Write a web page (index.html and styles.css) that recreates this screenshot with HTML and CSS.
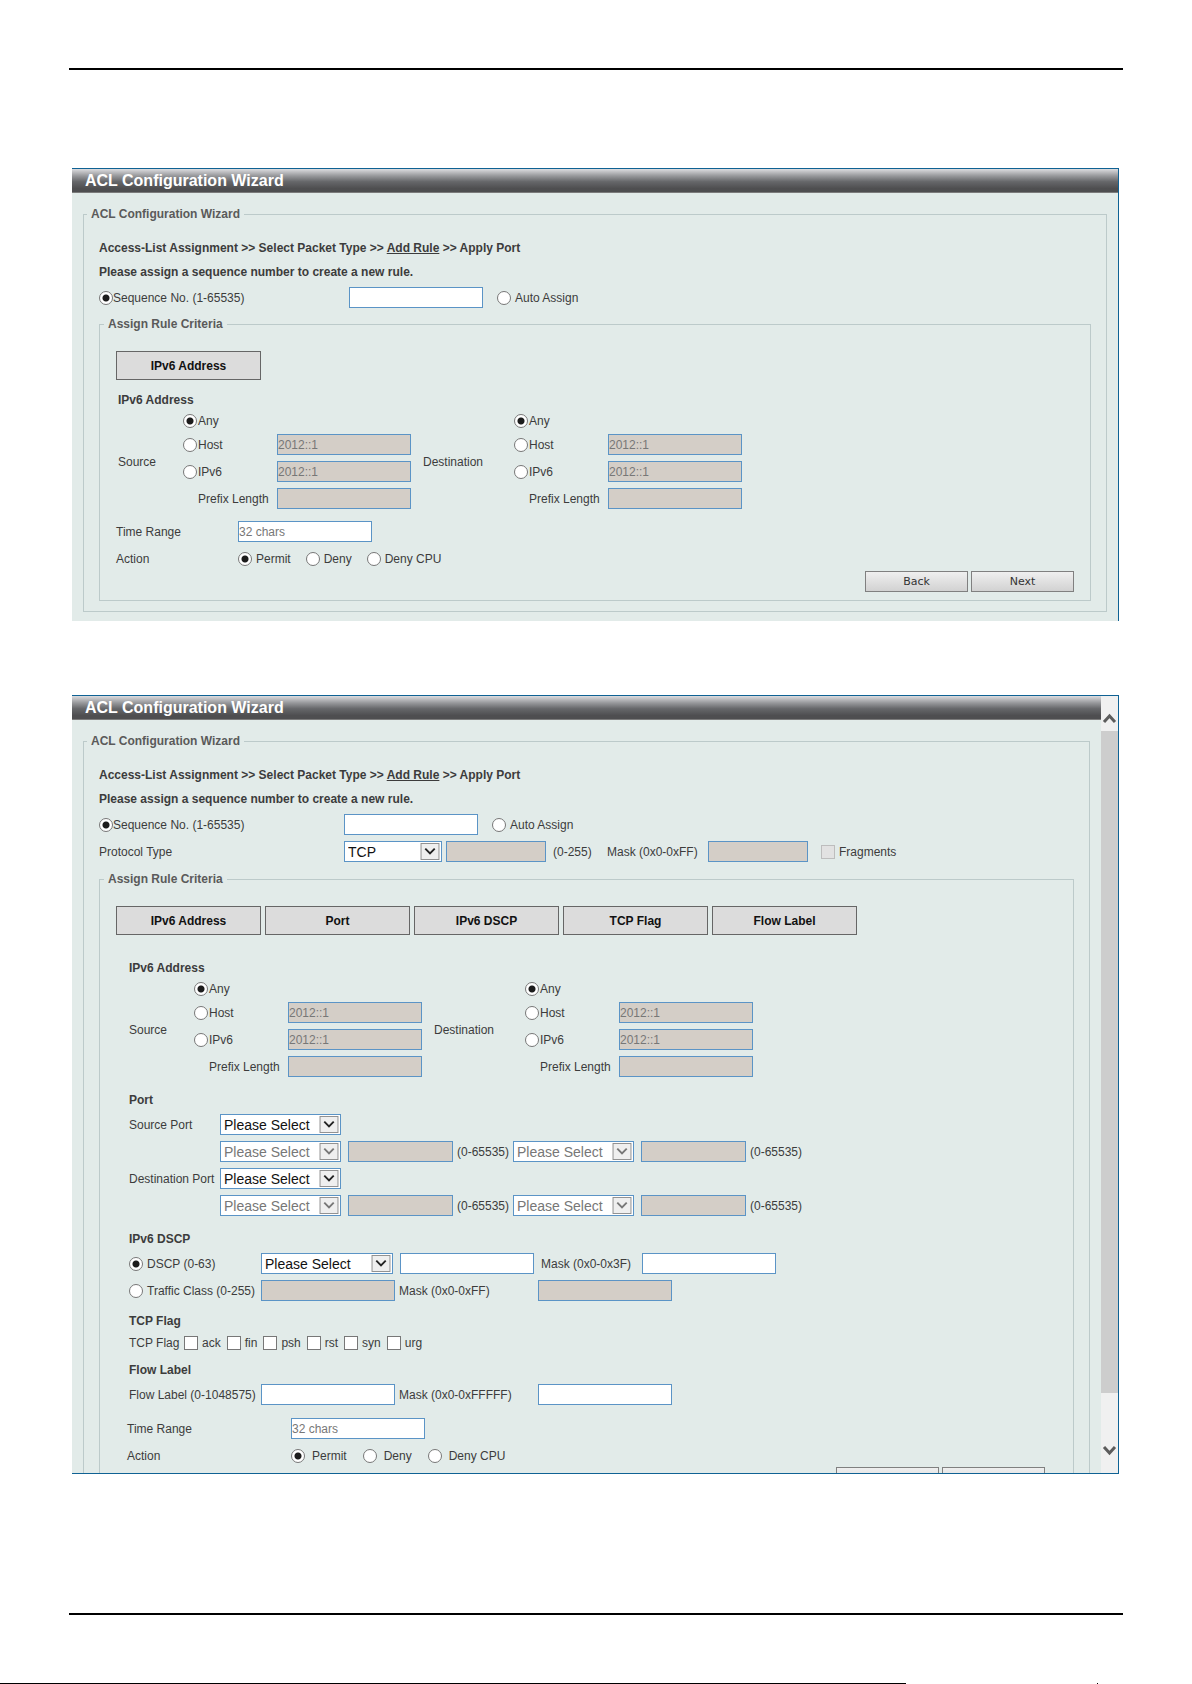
FILE: index.html
```html
<!DOCTYPE html>
<html lang="en">
<head>
    <meta charset="UTF-8">
    <meta name="viewport" content="width=device-width, initial-scale=1.0">
    <title>ACL Configuration Wizard</title>
    <link rel="stylesheet" href="styles.css">
</head>
<body>
    <svg class="symbols" aria-hidden="true">
        <symbol id="arrow" viewBox="0 0 20 18">
            <rect x="0.5" y="0.5" width="19" height="17" fill="#efefef" stroke="#8c8c8c"/>
            <path d="M5 6l5 5 5-5" fill="none" stroke="currentColor" stroke-width="2"/>
        </symbol>
    </svg>

    <div class="page">
        <hr class="rule">

        <form class="panel first">
            <div class="content">
                <h1>ACL Configuration Wizard</h1>
                <fieldset class="wizard">
                    <legend>ACL Configuration Wizard</legend>
                    <p class="steps">Access-List Assignment &gt;&gt; Select Packet Type &gt;&gt; <a href="#">Add Rule</a> &gt;&gt; Apply Port</p>
                    <p class="steps">Please assign a sequence number to create a new rule.</p>
                    <div class="row">
                        <label class="seq-label"><input type="radio" name="seq1" checked>Sequence No. (1-65535)</label>
                        <input type="text" class="field" aria-label="Sequence No.">
                        <label class="auto"><input type="radio" name="seq1">Auto Assign</label>
                    </div>

                    <fieldset class="criteria">
                        <legend>Assign Rule Criteria</legend>
                        <div class="tabs">
                            <button type="button">IPv6 Address</button>
                        </div>
                        <section class="address">
                            <h2>IPv6 Address</h2>
                            <div class="pair">
                                <span class="side">Source</span>
                                <div class="options">
                                    <label><input type="radio" name="src1" checked>Any</label><span></span>
                                    <label><input type="radio" name="src1">Host</label>
                                    <input type="text" class="field" placeholder="2012::1" aria-label="Source host" disabled>
                                    <label><input type="radio" name="src1">IPv6</label>
                                    <input type="text" class="field" placeholder="2012::1" aria-label="Source IPv6" disabled>
                                    <label class="prefix" for="src1-prefix">Prefix Length</label>
                                    <input type="text" class="field" id="src1-prefix" disabled>
                                </div>
                                <span class="side dest">Destination</span>
                                <div class="options">
                                    <label><input type="radio" name="dst1" checked>Any</label><span></span>
                                    <label><input type="radio" name="dst1">Host</label>
                                    <input type="text" class="field" placeholder="2012::1" aria-label="Destination host" disabled>
                                    <label><input type="radio" name="dst1">IPv6</label>
                                    <input type="text" class="field" placeholder="2012::1" aria-label="Destination IPv6" disabled>
                                    <label class="prefix" for="dst1-prefix">Prefix Length</label>
                                    <input type="text" class="field" id="dst1-prefix" disabled>
                                </div>
                            </div>
                        </section>
                        <div class="common">
                            <div class="row">
                                <label class="name" for="time1">Time Range</label>
                                <input type="text" class="field" id="time1" placeholder="32 chars">
                            </div>
                            <div class="row">
                                <span class="name">Action</span>
                                <label class="action"><input type="radio" name="action1" checked>Permit</label>
                                <label class="action"><input type="radio" name="action1">Deny</label>
                                <label class="action"><input type="radio" name="action1">Deny CPU</label>
                            </div>
                        </div>
                        <div class="nav">
                            <button type="button">Back</button>
                            <button type="button">Next</button>
                        </div>
                    </fieldset>
                </fieldset>
            </div>
        </form>

        <form class="panel second">
            <div class="content">
                <h1>ACL Configuration Wizard</h1>
                <fieldset class="wizard">
                    <legend>ACL Configuration Wizard</legend>
                    <p class="steps">Access-List Assignment &gt;&gt; Select Packet Type &gt;&gt; <a href="#">Add Rule</a> &gt;&gt; Apply Port</p>
                    <p class="steps">Please assign a sequence number to create a new rule.</p>
                    <div class="row">
                        <label class="seq-label"><input type="radio" name="seq2" checked>Sequence No. (1-65535)</label>
                        <input type="text" class="field" aria-label="Sequence No.">
                        <label class="auto"><input type="radio" name="seq2">Auto Assign</label>
                    </div>
                    <div class="row protocol">
                        <label class="seq-label" for="protocol">Protocol Type</label>
                        <span class="pick small"><select id="protocol"><option>TCP</option></select><svg><use href="#arrow"/></svg></span>
                        <input type="text" class="field medium" id="protocol-id" disabled>
                        <label class="range" for="protocol-id">(0-255)</label>
                        <label class="mask" for="protocol-mask">Mask (0x0-0xFF)</label>
                        <input type="text" class="field medium" id="protocol-mask" disabled>
                        <label class="fragments"><input type="checkbox" disabled>Fragments</label>
                    </div>

                    <fieldset class="criteria">
                        <legend>Assign Rule Criteria</legend>
                        <div class="tabs">
                            <button type="button">IPv6 Address</button>
                            <button type="button">Port</button>
                            <button type="button">IPv6 DSCP</button>
                            <button type="button">TCP Flag</button>
                            <button type="button">Flow Label</button>
                        </div>
                        <section class="address">
                            <h2>IPv6 Address</h2>
                            <div class="pair">
                                <span class="side">Source</span>
                                <div class="options">
                                    <label><input type="radio" name="src2" checked>Any</label><span></span>
                                    <label><input type="radio" name="src2">Host</label>
                                    <input type="text" class="field" placeholder="2012::1" aria-label="Source host" disabled>
                                    <label><input type="radio" name="src2">IPv6</label>
                                    <input type="text" class="field" placeholder="2012::1" aria-label="Source IPv6" disabled>
                                    <label class="prefix" for="src2-prefix">Prefix Length</label>
                                    <input type="text" class="field" id="src2-prefix" disabled>
                                </div>
                                <span class="side dest">Destination</span>
                                <div class="options">
                                    <label><input type="radio" name="dst2" checked>Any</label><span></span>
                                    <label><input type="radio" name="dst2">Host</label>
                                    <input type="text" class="field" placeholder="2012::1" aria-label="Destination host" disabled>
                                    <label><input type="radio" name="dst2">IPv6</label>
                                    <input type="text" class="field" placeholder="2012::1" aria-label="Destination IPv6" disabled>
                                    <label class="prefix" for="dst2-prefix">Prefix Length</label>
                                    <input type="text" class="field" id="dst2-prefix" disabled>
                                </div>
                            </div>
                        </section>

                        <section class="ports">
                            <h2>Port</h2>
                            <div class="row">
                                <label class="port-label" for="src-port">Source Port</label>
                                <span class="pick"><select id="src-port"><option>Please Select</option></select><svg><use href="#arrow"/></svg></span>
                            </div>
                            <div class="row">
                                <span class="port-label"></span>
                                <span class="pick"><select aria-label="Source port from" disabled><option>Please Select</option></select><svg><use href="#arrow"/></svg></span>
                                <input type="text" class="field port" id="src-from" disabled>
                                <label class="port-range" for="src-from">(0-65535)</label>
                                <span class="pick"><select aria-label="Source port to" disabled><option>Please Select</option></select><svg><use href="#arrow"/></svg></span>
                                <input type="text" class="field port" id="src-to" disabled>
                                <label class="port-range" for="src-to">(0-65535)</label>
                            </div>
                            <div class="row">
                                <label class="port-label" for="dst-port">Destination Port</label>
                                <span class="pick"><select id="dst-port"><option>Please Select</option></select><svg><use href="#arrow"/></svg></span>
                            </div>
                            <div class="row">
                                <span class="port-label"></span>
                                <span class="pick"><select aria-label="Destination port from" disabled><option>Please Select</option></select><svg><use href="#arrow"/></svg></span>
                                <input type="text" class="field port" id="dst-from" disabled>
                                <label class="port-range" for="dst-from">(0-65535)</label>
                                <span class="pick"><select aria-label="Destination port to" disabled><option>Please Select</option></select><svg><use href="#arrow"/></svg></span>
                                <input type="text" class="field port" id="dst-to" disabled>
                                <label class="port-range" for="dst-to">(0-65535)</label>
                            </div>
                        </section>

                        <section class="dscp">
                            <h2>IPv6 DSCP</h2>
                            <div class="row wide">
                                <label class="class-label"><input type="radio" name="dscp" checked>DSCP (0-63)</label>
                                <span class="pick large"><select aria-label="DSCP"><option>Please Select</option></select><svg><use href="#arrow"/></svg></span>
                                <input type="text" class="field" aria-label="DSCP value">
                                <label class="mask-short" for="dscp-mask">Mask (0x0-0x3F)</label>
                                <input type="text" class="field" id="dscp-mask">
                            </div>
                            <div class="row">
                                <label class="class-label"><input type="radio" name="dscp">Traffic Class (0-255)</label>
                                <input type="text" class="field" aria-label="Traffic class" disabled>
                                <label class="mask-long" for="traffic-mask">Mask (0x0-0xFF)</label>
                                <input type="text" class="field" id="traffic-mask" disabled>
                            </div>
                        </section>

                        <section class="flags">
                            <h2>TCP Flag</h2>
                            <div class="flag-row">
                                <span>TCP Flag</span>
                                <label><input type="checkbox">ack</label>
                                <label><input type="checkbox">fin</label>
                                <label><input type="checkbox">psh</label>
                                <label><input type="checkbox">rst</label>
                                <label><input type="checkbox">syn</label>
                                <label><input type="checkbox">urg</label>
                            </div>
                        </section>

                        <section class="flow">
                            <h2>Flow Label</h2>
                            <div class="row">
                                <label class="class-label" for="flow">Flow Label (0-1048575)</label>
                                <input type="text" class="field" id="flow">
                                <label class="mask-long" for="flow-mask">Mask (0x0-0xFFFFF)</label>
                                <input type="text" class="field" id="flow-mask">
                            </div>
                        </section>

                        <div class="common">
                            <div class="row">
                                <label class="name" for="time2">Time Range</label>
                                <input type="text" class="field" id="time2" placeholder="32 chars">
                            </div>
                            <div class="row">
                                <span class="name">Action</span>
                                <label class="action"><input type="radio" name="action2" checked>Permit</label>
                                <label class="action"><input type="radio" name="action2">Deny</label>
                                <label class="action"><input type="radio" name="action2">Deny CPU</label>
                            </div>
                        </div>
                        <div class="nav">
                            <button type="button">Back</button>
                            <button type="button">Next</button>
                        </div>
                    </fieldset>
                </fieldset>
            </div>
            <div class="scrollbar">
                <svg viewBox="0 0 17 35" width="17" height="35"><path d="M3 26l5.500-6 5.500 6" fill="none" stroke="#5c5c5c" stroke-width="3"/></svg>
                <div class="thumb"></div>
                <svg viewBox="0 0 17 35" width="17" height="35"><path d="M3 9l5.500 6 5.500-6" fill="none" stroke="#5c5c5c" stroke-width="3"/></svg>
            </div>
        </form>

        <hr class="rule bottom">
    </div>
    <div class="edge"><span></span><i></i></div>
</body>
</html>
```

FILE: styles.css
```css
* {
    box-sizing: border-box;
}
body {
    margin: 0;
    background-color: #fff;
    color: #3c3c3c;
    font-family: "Liberation Sans", Arial, sans-serif;
    font-size: 12px;
    line-height: 16px;
}
.symbols {
    display: none;
}
.page {
    padding: 68px 69px;
}
.rule {
    margin: 0;
    border: none;
    height: 2px;
    background-color: #000;
}
.rule.bottom {
    margin-top: 139px;
}

/* Panels */
.panel {
    display: flex;
    margin: 0 4px 0 3px;
    background-color: #e2ebe9;
    border-top: 1px solid #0f6294;
    border-right: 1px solid #0f6294;
}
.first {
    margin-top: 98px;
    padding-bottom: 9px;
}
.second {
    margin-top: 74px;
    height: 779px;
    overflow: hidden;
    border-bottom: 1px solid #0f6294;
}
.content {
    flex: 1;
}
h1 {
    margin: 0 0 13px;
    padding-left: 13px;
    height: 24px;
    line-height: 23px;
    font-size: 16px;
    color: #fff;
    background: linear-gradient(to bottom, #dcdcdf, #97989b 30%, #66676a 55%, #4e4e50 85%);
    border-bottom: 1px solid #7b7b7b;
}
h2 {
    margin: 0;
    font-size: 12px;
    line-height: 21px;
}
fieldset {
    margin: 0;
    padding: 0;
    min-width: 0;
    border: 1px solid #bccaca;
}
legend {
    padding: 0 4px;
    font-weight: bold;
    color: #5a5a5a;
}
.wizard {
    margin: 0 11px;
    padding: 14px 15px 10px;
}
.criteria {
    margin-top: 5px;
    padding: 19px 16px 8px;
}
.wizard > legend, .criteria > legend {
    margin-left: -12px;
}
.steps {
    margin: 0;
    font-weight: bold;
    line-height: 24px;
}
.steps a {
    color: inherit;
}
.row {
    display: flex;
    align-items: center;
    height: 27px;
}
label {
    display: flex;
    align-items: center;
    gap: 4px;
    white-space: nowrap;
}

/* Form controls */
input, select, button {
    margin: 0;
    font-family: inherit;
    font-size: 12px;
}
.field {
    width: 134px;
    height: 21px;
    padding: 0;
    background-color: #fff;
    border: 1px solid #5b94c6;
}
.field:disabled {
    background-color: #d4cec7;
}
.field::placeholder {
    color: #777;
}
.field.medium {
    width: 100px;
}
.field.port {
    width: 105px;
    margin-left: 7px;
}
input[type="radio"], input[type="checkbox"] {
    appearance: none;
    flex: none;
    width: 14px;
    height: 14px;
    background-color: #fff;
    border: 1px solid #777;
}
input[type="radio"] {
    border-radius: 50%;
}
input[type="radio"]:checked {
    background-image: radial-gradient(circle, #1c1c1c 3px, #fff 4px);
}
input[type="checkbox"]:disabled {
    background-color: #e2e2e2;
    border-color: #bdbdbd;
}
.pick {
    position: relative;
    width: 121px;
    height: 21px;
}
.pick.small {
    width: 98px;
}
.pick.large {
    width: 132px;
}
.pick select {
    appearance: none;
    width: 100%;
    height: 100%;
    padding: 0 3px;
    font-size: 14px;
    color: #111;
    background-color: #fff;
    border: 1px solid #5b94c6;
}
.pick select:disabled {
    color: #777;
    opacity: 1;
}
.pick svg {
    position: absolute;
    top: 2px;
    right: 2px;
    width: 20px;
    height: 17px;
    color: #222;
    pointer-events: none;
}
.pick select:disabled + svg {
    color: #777;
}

.seq-label {
    width: 250px;
    gap: 0;
}
.second .seq-label {
    width: 245px;
}
.auto {
    margin-left: 14px;
}
.protocol .field {
    margin-left: 4px;
}
.range {
    margin-left: 7px;
    width: 54px;
}
.mask {
    width: 97px;
}
.fragments {
    margin-left: 13px;
}

.tabs {
    display: flex;
    gap: 4px;
}
.tabs button {
    width: 145px;
    height: 29px;
    padding: 0;
    font-weight: bold;
    color: #111;
    background-color: #dcdcdc;
    border: 1px solid #666;
}

/* IPv6 address block */
.address {
    margin-top: 10px;
    padding-left: 2px;
}
.pair {
    display: flex;
    align-items: center;
}
.side {
    width: 65px;
}
.dest {
    width: 91px;
}
.options {
    display: grid;
    grid-template-columns: 94px 146px;
    grid-template-rows: 20px 27px 27px 27px;
    align-items: center;
}
.options label {
    gap: 1px;
}
.options .prefix {
    padding-left: 15px;
}

.second .criteria {
    margin-top: 6px;
}
.second section {
    padding-left: 13px;
}
.second .address {
    margin-top: 23px;
}
.ports, .dscp {
    margin-top: 10px;
}
.flags, .flow {
    margin-top: 7px;
}
.port-label {
    width: 91px;
}
.port-range {
    width: 60px;
    padding-left: 4px;
}
.class-label {
    width: 132px;
}
.wide .field {
    margin-left: 7px;
}
.mask-short {
    width: 94px;
    margin-left: 7px;
}
.mask-long {
    width: 143px;
    padding-left: 4px;
}
.flag-row {
    display: flex;
    align-items: center;
    gap: 6px;
    height: 21px;
}
.flag-row span {
    width: 49px;
    white-space: nowrap;
}

.common {
    margin-top: 6px;
}
.name {
    width: 122px;
}
.action {
    margin-right: 15px;
}
.second .common {
    margin-top: 7px;
    padding-left: 11px;
}
.second .name {
    width: 164px;
}
.second .action {
    gap: 7px;
    margin-right: 16px;
}
.nav {
    display: flex;
    justify-content: flex-end;
    gap: 3px;
    margin-top: -1px;
}
.second .nav {
    margin-top: -2px;
    padding-right: 12px;
}
.nav button {
    width: 103px;
    height: 21px;
    padding: 0;
    font-family: "DejaVu Sans", Verdana, sans-serif;
    font-size: 11px;
    color: #333;
    background: linear-gradient(to bottom, #efefef, #d2d2d2);
    border: 1px solid #808080;
}

.scrollbar {
    display: flex;
    flex-direction: column;
    width: 17px;
    background-color: #f0f0f0;
}
.scrollbar svg {
    flex: none;
}
.thumb {
    flex: 1;
    background-color: #cdcdcd;
    margin-bottom: 45px;
}

/* Line on the lower edge of the sheet */
.edge {
    display: flex;
    height: 1px;
}
.edge span {
    width: 76%;
    background-color: #000;
}
.edge i {
    width: 1px;
    margin-left: 16%;
    background-color: #000;
}
```
